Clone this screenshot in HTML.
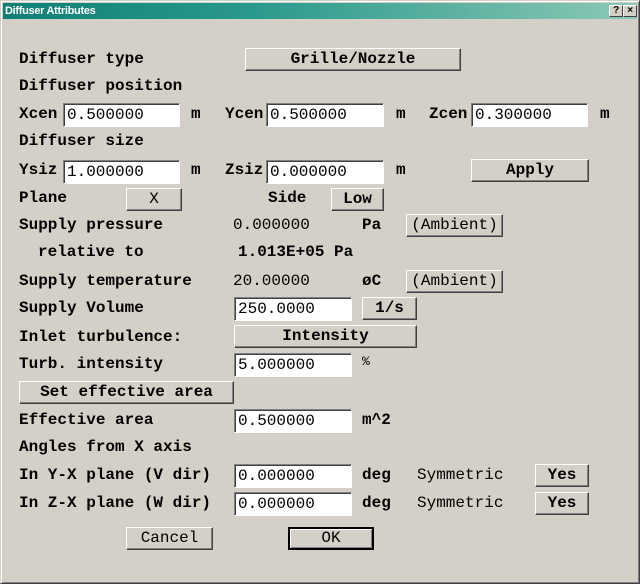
<!DOCTYPE html>
<html><head><meta charset="utf-8"><style>
*{margin:0;padding:0;box-sizing:border-box}
body{width:640px;height:584px;background:#d4d0c8;position:relative;overflow:hidden;font-family:"Liberation Mono",monospace;font-size:16px;color:#000}
.win{position:absolute;left:0;top:0;width:640px;height:584px;border:1px solid;border-color:#d4d0c8 #404040 #404040 #d4d0c8;box-shadow:inset 1px 1px 0 #fff,inset -1px -1px 0 #808080}
.title{position:absolute;left:3px;top:3px;width:634px;height:16px;background:linear-gradient(90deg,#0f7f76,#2b9a8c 40%,#8cc8b6);color:#fff;font:bold 11px "Liberation Sans",sans-serif;padding:2px 0 0 2px;letter-spacing:-0.3px}
.tb{position:absolute;top:2px;width:14px;height:12px;background:#d4d0c8;border:1px solid;border-color:#fff #404040 #404040 #fff;color:#000;font:bold 10px "Liberation Sans",sans-serif;text-align:center;line-height:10px}
.t{position:absolute;font-weight:bold;line-height:18px;white-space:pre}
.n{font-weight:normal}
.in{position:absolute;background:#fff;border:1px solid;border-color:#808080 #fff #fff #808080;box-shadow:inset 1px 1px 0 #404040;height:24px;padding:2px 0 0 3px;line-height:18px;white-space:pre}
.b{position:absolute;height:23px;border:1px solid;border-color:#fff #404040 #404040 #fff;box-shadow:inset -1px -1px 0 #808080;text-align:center;line-height:20px;white-space:pre}
.bb{font-weight:bold}
</style></head><body>
<div class="win"></div>
<div class="title">Diffuser Attributes
<div class="tb" style="left:606px">?</div><div class="tb" style="left:620px">×</div></div>

<div class="t" style="left:19px;top:50px">Diffuser type</div>
<div class="b bb" style="left:245px;top:48px;width:216px">Grille/Nozzle</div>
<div class="t" style="left:19px;top:77px">Diffuser position</div>

<div class="t" style="left:19px;top:105px">Xcen</div>
<div class="in" style="left:63px;top:103px;width:117px">0.500000</div>
<div class="t" style="left:191px;top:105px">m</div>
<div class="t" style="left:225px;top:105px">Ycen</div>
<div class="in" style="left:266px;top:103px;width:118px">0.500000</div>
<div class="t" style="left:396px;top:105px">m</div>
<div class="t" style="left:429px;top:105px">Zcen</div>
<div class="in" style="left:471px;top:103px;width:117px">0.300000</div>
<div class="t" style="left:600px;top:105px">m</div>

<div class="t" style="left:19px;top:132px">Diffuser size</div>
<div class="t" style="left:19px;top:161px">Ysiz</div>
<div class="in" style="left:63px;top:160px;width:117px">1.000000</div>
<div class="t" style="left:191px;top:161px">m</div>
<div class="t" style="left:225px;top:161px">Zsiz</div>
<div class="in" style="left:266px;top:160px;width:118px">0.000000</div>
<div class="t" style="left:396px;top:161px">m</div>
<div class="b bb" style="left:471px;top:159px;width:118px">Apply</div>

<div class="t" style="left:19px;top:189px">Plane</div>
<div class="b" style="left:126px;top:188px;width:56px">X</div>
<div class="t" style="left:268px;top:189px">Side</div>
<div class="b bb" style="left:331px;top:188px;width:53px">Low</div>

<div class="t" style="left:19px;top:216px">Supply pressure</div>
<div class="t n" style="left:233px;top:216px">0.000000</div>
<div class="t" style="left:362px;top:216px">Pa</div>
<div class="b" style="left:406px;top:214px;width:97px">(Ambient)</div>

<div class="t" style="left:38px;top:243px">relative to</div>
<div class="t" style="left:238px;top:243px">1.013E+05 Pa</div>

<div class="t" style="left:19px;top:272px">Supply temperature</div>
<div class="t n" style="left:233px;top:272px">20.00000</div>
<div class="t" style="left:362px;top:272px">øC</div>
<div class="b" style="left:406px;top:270px;width:97px">(Ambient)</div>

<div class="t" style="left:19px;top:299px">Supply Volume</div>
<div class="in" style="left:234px;top:297px;width:118px">250.0000</div>
<div class="b bb" style="left:362px;top:297px;width:55px">1/s</div>

<div class="t" style="left:19px;top:328px">Inlet turbulence:</div>
<div class="b bb" style="left:234px;top:325px;width:183px">Intensity</div>

<div class="t" style="left:19px;top:355px">Turb. intensity</div>
<div class="in" style="left:234px;top:353px;width:118px">5.000000</div>
<div class="t n" style="left:362px;top:353px;font-size:13px">%</div>

<div class="b bb" style="left:19px;top:381px;width:215px">Set effective area</div>

<div class="t" style="left:19px;top:411px">Effective area</div>
<div class="in" style="left:234px;top:409px;width:118px">0.500000</div>
<div class="t" style="left:362px;top:411px">m^2</div>

<div class="t" style="left:19px;top:438px">Angles from X axis</div>

<div class="t" style="left:19px;top:466px">In Y-X plane (V dir)</div>
<div class="in" style="left:234px;top:464px;width:118px">0.000000</div>
<div class="t" style="left:362px;top:466px">deg</div>
<div class="t n" style="left:417px;top:466px">Symmetric</div>
<div class="b bb" style="left:535px;top:464px;width:54px">Yes</div>

<div class="t" style="left:19px;top:494px">In Z-X plane (W dir)</div>
<div class="in" style="left:234px;top:492px;width:118px">0.000000</div>
<div class="t" style="left:362px;top:494px">deg</div>
<div class="t n" style="left:417px;top:494px">Symmetric</div>
<div class="b bb" style="left:535px;top:492px;width:54px">Yes</div>

<div class="b" style="left:126px;top:527px;width:87px">Cancel</div>
<div class="b" style="left:288px;top:527px;width:86px;border:2px solid #000;box-shadow:inset 1px 1px 0 #fff,inset -1px -1px 0 #808080;line-height:19px">OK</div>
</body></html>
